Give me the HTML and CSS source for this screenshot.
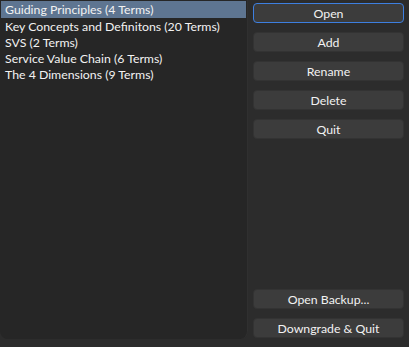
FILE: index.html
```html
<!DOCTYPE html>
<html lang="en">
<head>
  <meta charset="UTF-8">
  <title>Term Sets</title>
  <link rel="stylesheet" href="styles.css">
</head>
<body>
  <main class="window">
    <ul class="set-list">
      <li class="set-item selected">Guiding Principles (4 Terms)</li>
      <li class="set-item">Key Concepts and Definitons (20 Terms)</li>
      <li class="set-item">SVS (2 Terms)</li>
      <li class="set-item">Service Value Chain (6 Terms)</li>
      <li class="set-item">The 4 Dimensions (9 Terms)</li>
    </ul>
    <div class="actions">
      <div class="btn-group">
        <button class="btn focused">Open</button>
        <button class="btn">Add</button>
        <button class="btn">Rename</button>
        <button class="btn">Delete</button>
        <button class="btn">Quit</button>
      </div>
      <div class="btn-group">
        <button class="btn">Open Backup...</button>
        <button class="btn">Downgrade &amp; Quit</button>
      </div>
    </div>
  </main>
</body>
</html>
```

FILE: styles.css
```css
body {
  margin: 0;
  width: 409px;
  height: 347px;
  background-color: #2c2c2c;
  font-family: Lato, "Noto Sans", sans-serif;
  font-size: 12.3px;
  color: #f2f2f2;
  overflow: hidden;
}
.window {
  display: flex;
  height: 347px;
}
.set-list {
  list-style: none;
  margin: 0;
  padding: 1px 1px 0 1px;
  width: 245px;
  height: 338px;
  background-color: #262626;
  border-right: 1px solid #303030;
  border-radius: 0 0 8px 8px;
}
.set-item {
  height: 16px;
  line-height: 18px;
  padding-left: 4px;
  white-space: nowrap;
}
.set-item.selected {
  height: 17px;
  background-color: #5e7591;
}
.actions {
  display: flex;
  flex-direction: column;
  justify-content: space-between;
  margin-left: 5px;
  padding: 3px 0 9px 0;
  width: 151px;
}
.btn-group {
  display: flex;
  flex-direction: column;
  gap: 9px;
}
.btn {
  height: 20px;
  padding: 0;
  border: 1px solid #333333;
  border-radius: 4px;
  background-color: #3c3c3c;
  color: #f2f2f2;
  font-family: inherit;
  font-size: 12.3px;
  line-height: 19px;
}
.btn.focused {
  border-color: #3d7fe0;
}
```
